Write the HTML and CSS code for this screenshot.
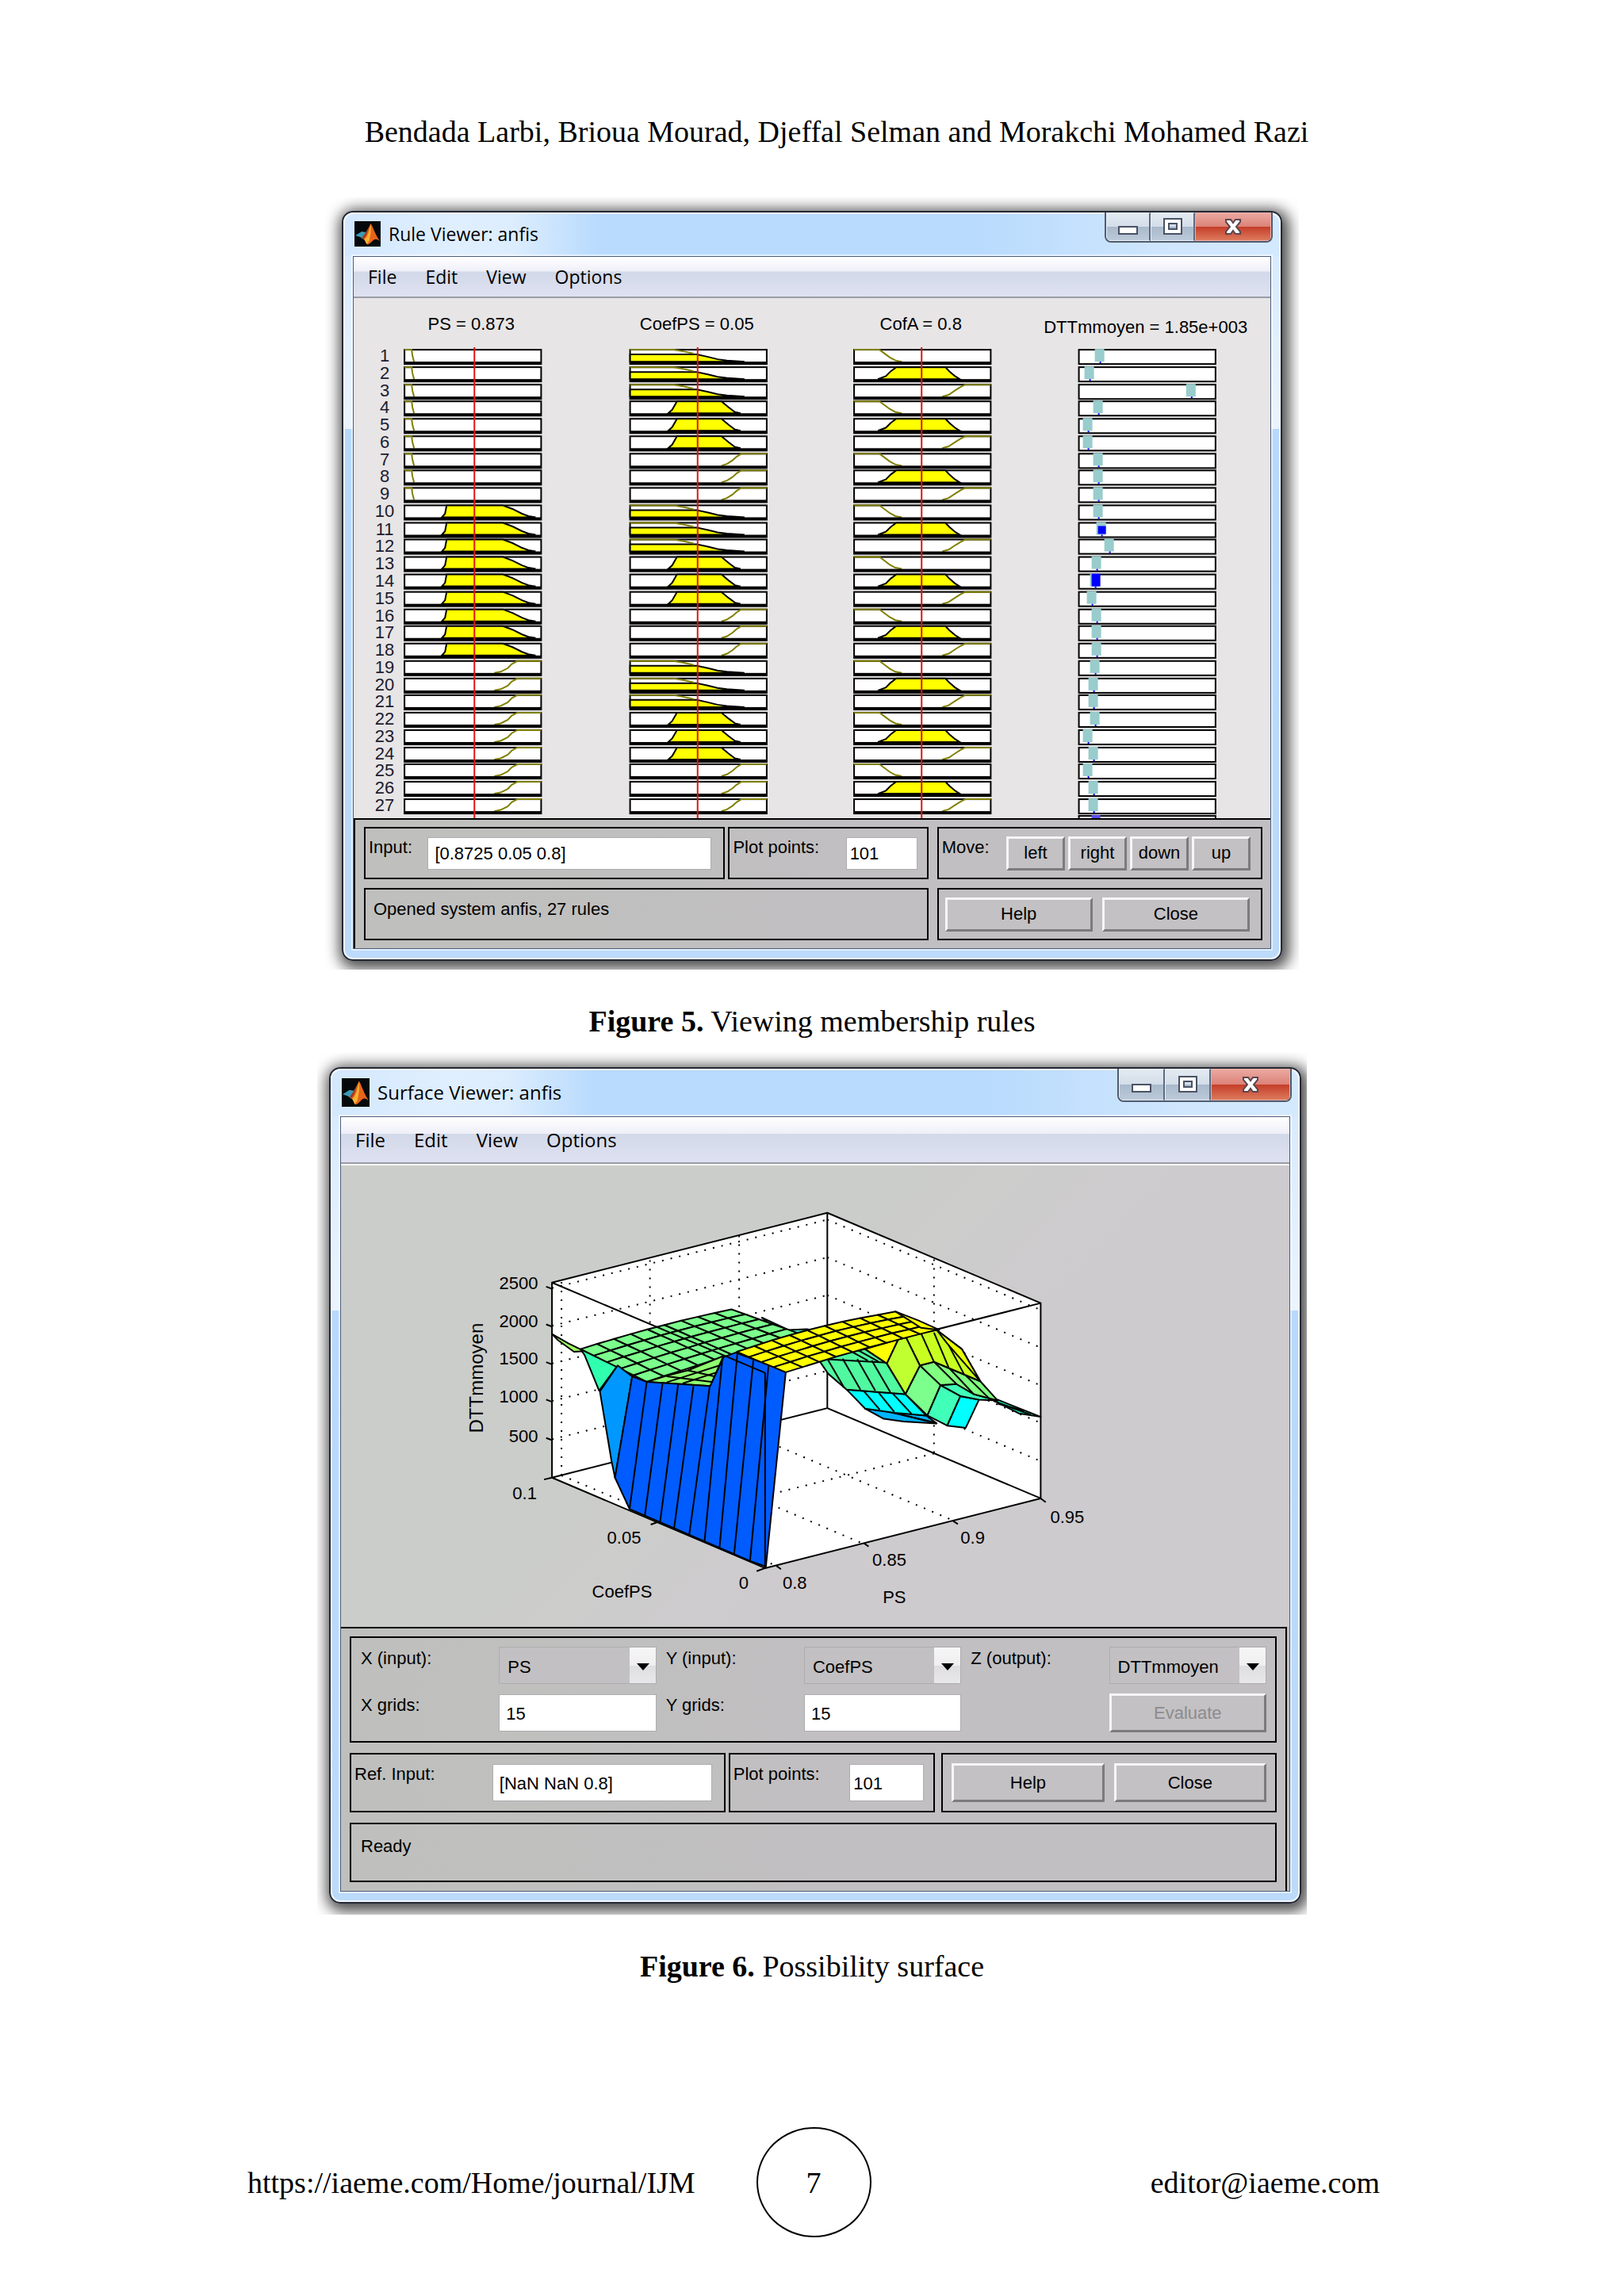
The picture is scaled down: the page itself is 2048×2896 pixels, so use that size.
FILE: index.html
```html
<!DOCTYPE html>
<html lang="en">
  <head>
    <meta charset="UTF-8" />
    <meta name="viewport" content="width=device-width, initial-scale=1.0" />
    <title>Membership rules and possibility surface</title>
    <link rel="stylesheet" href="styles.css">
  </head>
  <body>
    <header class="authors">Bendada Larbi, Brioua Mourad, Djeffal Selman and Morakchi Mohamed Razi</header>
    <main>
      <figure>
        <div class="shot">
          <section class="window rule-viewer">
            <div class="titlebar">
              <svg class="logo" viewBox="0 0 32 32" preserveAspectRatio="none">
                <rect width="32" height="32" fill="#05090b" />
                <path d="M1 18 L9 13 L14 14 L18 7 L16 18 L11 23 L7 20 Z" fill="#3c9ab8" />
                <path d="M14 14 L18 7 L20 4 L17 17 L12 23 L9 21 Z" fill="#a33a1c" />
                <path d="M20 3 C23 8 25 16 31 25 C27 22 25 22 22 25 C19 28 17 30 15 29 C14 26 13 24 11 22 C16 19 17 7 20 3 Z" fill="#e8641b" />
                <path d="M20 4 L20 14 L18 25 L15 29 L12 23 C17 20 18 10 20 4 Z" fill="#f9b233" />
              </svg>
              <h2>Rule Viewer: anfis</h2>
              <div class="win-buttons">
                <button aria-label="Minimize"><svg viewBox="0 0 28 24"><rect x="2" y="12" width="23" height="9" fill="#fff" stroke="#4a5364" stroke-width="2" /></svg></button>
                <button aria-label="Maximize"><svg viewBox="0 0 28 24"><path d="M3 2 H25 V21 H3 Z M9 8 V15 H19 V8 Z" fill="#fff" fill-rule="evenodd" stroke="#4a5364" stroke-width="2" /></svg></button>
                <button class="close" aria-label="Close window"><svg viewBox="0 0 28 24"><path d="M5 3 H11 L14 7 L17 3 H23 V6 L18 12 L23 18 V21 H17 L14 17 L11 21 H5 V18 L10 12 L5 6 Z" fill="#fff" stroke="#5a4650" stroke-width="2" /></svg></button>
              </div>
            </div>
            <div class="client">
              <nav>
                <button>File</button>
                <button>Edit</button>
                <button>View</button>
                <button>Options</button>
              </nav>
              <svg id="rules" class="plot" viewBox="0 0 1154 655"></svg>
              <form class="controls">
                <div class="panel field">
                  <label for="input">Input:</label>
                  <input id="input" type="text" value="[0.8725 0.05 0.8]">
                </div>
                <div class="panel field points">
                  <label for="points1">Plot points:</label>
                  <input id="points1" type="text" value="101">
                </div>
                <div class="panel move">
                  <span>Move:</span>
                  <button type="button">left</button>
                  <button type="button">right</button>
                  <button type="button">down</button>
                  <button type="button">up</button>
                </div>
                <p class="panel status">Opened system anfis, 27 rules</p>
                <div class="panel actions">
                  <button type="button">Help</button>
                  <button type="button">Close</button>
                </div>
              </form>
            </div>
          </section>
        </div>
        <figcaption><b>Figure 5.</b> Viewing membership rules</figcaption>
      </figure>

      <figure>
        <div class="shot wide">
          <section class="window surface-viewer">
            <div class="titlebar">
              <svg class="logo" viewBox="0 0 32 32" preserveAspectRatio="none">
                <rect width="32" height="32" fill="#05090b" />
                <path d="M1 18 L9 13 L14 14 L18 7 L16 18 L11 23 L7 20 Z" fill="#3c9ab8" />
                <path d="M14 14 L18 7 L20 4 L17 17 L12 23 L9 21 Z" fill="#a33a1c" />
                <path d="M20 3 C23 8 25 16 31 25 C27 22 25 22 22 25 C19 28 17 30 15 29 C14 26 13 24 11 22 C16 19 17 7 20 3 Z" fill="#e8641b" />
                <path d="M20 4 L20 14 L18 25 L15 29 L12 23 C17 20 18 10 20 4 Z" fill="#f9b233" />
              </svg>
              <h2>Surface Viewer: anfis</h2>
              <div class="win-buttons">
                <button aria-label="Minimize"><svg viewBox="0 0 28 24"><rect x="2" y="12" width="23" height="9" fill="#fff" stroke="#4a5364" stroke-width="2" /></svg></button>
                <button aria-label="Maximize"><svg viewBox="0 0 28 24"><path d="M3 2 H25 V21 H3 Z M9 8 V15 H19 V8 Z" fill="#fff" fill-rule="evenodd" stroke="#4a5364" stroke-width="2" /></svg></button>
                <button class="close" aria-label="Close window"><svg viewBox="0 0 28 24"><path d="M5 3 H11 L14 7 L17 3 H23 V6 L18 12 L23 18 V21 H17 L14 17 L11 21 H5 V18 L10 12 L5 6 Z" fill="#fff" stroke="#5a4650" stroke-width="2" /></svg></button>
              </div>
            </div>
            <div class="client">
              <nav>
                <button>File</button>
                <button>Edit</button>
                <button>View</button>
                <button>Options</button>
              </nav>
              <svg class="plot" viewBox="0 0 1194 581">
                <g id="surface" transform="translate(130 28) scale(.3333 .3444)"></g>
                <g class="ticks">
                  <text class="end" x="248" y="156">2500</text>
                  <text class="end" x="248" y="204">2000</text>
                  <text class="end" x="248" y="251">1500</text>
                  <text class="end" x="248" y="299">1000</text>
                  <text class="end" x="248" y="348">500</text>
                  <text x="216" y="420">0.1</text>
                  <text x="335" y="476">0.05</text>
                  <text x="501" y="533">0</text>
                  <text x="556" y="533">0.8</text>
                  <text x="669" y="504">0.85</text>
                  <text x="780" y="476">0.9</text>
                  <text x="893" y="450">0.95</text>
                  <text x="316" y="544">CoefPS</text>
                  <text x="682" y="551">PS</text>
                  <text class="zlabel" transform="translate(179 337) rotate(-90)">DTTmmoyen</text>
                </g>
              </svg>
              <form class="controls">
                <div class="panel axes">
                  <label for="xin">X (input):</label>
                  <span class="select"><select id="xin"><option>PS</option></select></span>
                  <label for="yin">Y (input):</label>
                  <span class="select"><select id="yin"><option>CoefPS</option></select></span>
                  <label for="zout">Z (output):</label>
                  <span class="select"><select id="zout"><option>DTTmmoyen</option></select></span>
                  <label for="xgrid">X grids:</label>
                  <input id="xgrid" type="text" value="15">
                  <label for="ygrid">Y grids:</label>
                  <input id="ygrid" type="text" value="15">
                  <button type="button" class="evaluate" disabled>Evaluate</button>
                </div>
                <div class="panel field">
                  <label for="ref">Ref. Input:</label>
                  <input id="ref" type="text" value="[NaN NaN 0.8]">
                </div>
                <div class="panel field points">
                  <label for="points2">Plot points:</label>
                  <input id="points2" type="text" value="101">
                </div>
                <div class="panel actions">
                  <button type="button">Help</button>
                  <button type="button">Close</button>
                </div>
                <p class="panel status">Ready</p>
              </form>
            </div>
          </section>
        </div>
        <figcaption><b>Figure 6.</b> Possibility surface</figcaption>
      </figure>
    </main>
    <footer>
      <a href="https://iaeme.com/Home/journal/IJM">https://iaeme.com/Home/journal/IJM</a>
      <span class="page-number">7</span>
      <a href="mailto:editor@iaeme.com">editor@iaeme.com</a>
    </footer>
    <script src="script.js"></script>
  </body>
</html>
```
FILE: styles.css
```css
* {
  box-sizing: border-box;
}

body {
  margin: 0;
  min-height: 100vh;
  display: flex;
  flex-direction: column;
  background-color: white;
  color: black;
  font-family: "Liberation Serif", "Times New Roman", serif;
  font-size: 38px;
  line-height: 48px;
}

.authors {
  padding: 142px 0 59px 62px;
  text-align: center;
}

figure {
  margin: 0;
  display: flex;
  flex-direction: column;
  align-items: center;
}

figcaption {
  margin: 41px 0 16px;
}

button,
input,
select {
  font: inherit;
  color: inherit;
  margin: 0;
}

/* windows */
.shot {
  width: 100%;
  max-width: 1228px;
  padding: 17px 21px 11px;
  overflow: hidden;
}

.shot.wide {
  max-width: 1248px;
  padding: 18px 7px 14px 15px;
}

.window {
  border: 2px solid #232834;
  border-radius: 14px;
  padding: 0 12px 13px;
  background: linear-gradient(#d3e8fe, #eaf4fe 29%, #b7d9fd 29%, #bcdafa);
  box-shadow: inset 0 0 0 2px rgba(255, 255, 255, 0.8), 3px 4px 18px 6px rgba(0, 0, 0, 0.7);
  font-family: "Liberation Sans", Arial, sans-serif;
  font-size: 22px;
  line-height: 26px;
}

.titlebar {
  display: flex;
  align-items: center;
  height: 55px;
  margin: 0 -10px;
  padding: 0 8px 3px 12px;
  border-top: 2px solid #eef7ff;
  border-radius: 12px 12px 0 0;
  background: linear-gradient(to right, #d3e8fe, #e0effe 12%, #dcedfe 18%, #b9dbfd 27%, #b9dbfd 68%, #cfe6fd 88%, #d3e9fe);
}

.logo {
  width: 33px;
  height: 32px;
}

.titlebar h2 {
  margin: 0 auto 0 10px;
  font-family: "Open Sans", "Noto Sans", sans-serif;
  font-size: 23px;
  font-weight: normal;
}

.win-buttons {
  display: flex;
  align-self: flex-start;
  height: 38px;
  margin-top: -2px;
  border: 2px solid #4f5b6e;
  border-top: 0;
  border-radius: 0 0 8px 8px;
  overflow: hidden;
}

.win-buttons button {
  display: flex;
  align-items: center;
  justify-content: center;
  width: 56px;
  padding: 0;
  border: 1px solid #e8eff7;
  border-right: 2px solid #5d6b80;
  background: linear-gradient(#e3eaf2, #d3dde9 50%, #a9b9cb 50%, #bccada);
}

.win-buttons .close {
  width: 96px;
  border-color: #eeb0a8;
  border-right-width: 1px;
  background: linear-gradient(#eba9a1, #dc8277 50%, #c53d28 50%, #dc7a5c);
}

.win-buttons svg {
  width: 28px;
  height: 24px;
}

.client {
  border: 1px solid #4d5d79;
  outline: 2px solid rgba(255, 255, 255, 0.6);
}

nav {
  display: flex;
  height: 52px;
  border-bottom: 2px solid #9a9ca6;
  background: linear-gradient(#fff, #efeff9 36%, #d2d9e8 38%, #dfe1f2);
  font-family: "Open Sans", "Noto Sans", sans-serif;
  font-size: 23px;
}

nav button {
  padding: 0 18px;
  border: 0;
  background: none;
}

.plot {
  display: block;
  width: 100%;
  background-color: #e7e5e6;
  font-size: 22px;
}

/* control area under the plots */
.controls {
  display: grid;
  grid-template-columns: 455fr 256fr 421fr;
  gap: 11px 0;
  padding: 9px 10px 10px 11px;
  border-top: 2px solid black;
  border-left: 2px solid black;
  background: linear-gradient(to right, #bfc0bd, #c1bfc1 50%);
}

.panel {
  display: flex;
  align-items: center;
  min-height: 66px;
  margin: 0;
  border: 2px solid black;
}

.panel label,
.move span {
  align-self: flex-start;
  padding-top: 11px;
}

.controls input {
  height: 41px;
  min-width: 0;
  padding: 2px 8px 0;
  border: 1px solid #adadb0;
  background-color: white;
}

.controls button {
  height: 43px;
  padding: 0;
  border: 3px solid;
  border-color: #f6f6f6 #7c7a7c #7c7a7c #f6f6f6;
  background-color: #c3c1c3;
}

.field {
  padding: 0 15px 0 4px;
  justify-content: space-between;
}

.field input {
  width: 358px;
}

.points {
  margin-left: 4px;
  padding-right: 12px;
}

.points input {
  width: 90px;
  padding: 2px 4px 0;
}

.move {
  margin-left: 11px;
  padding: 0 13px 0 4px;
  gap: 4px;
}

.move span {
  margin-right: auto;
}

.move button {
  width: 74px;
}

.status {
  padding: 0 10px 12px;
}

.rule-viewer .status {
  grid-column: 1 / 3;
}

.actions {
  margin-left: 11px;
  padding: 0 14px 0 8px;
  gap: 12px;
}

.actions button {
  flex: 1;
}

/* surface viewer */
.surface-viewer .titlebar {
  height: 60px;
}

.surface-viewer .logo {
  width: 35px;
  height: 36px;
}

.surface-viewer h2,
.surface-viewer nav {
  font-size: 24px;
}

.surface-viewer .win-buttons {
  height: 42px;
}

.surface-viewer .win-buttons button {
  width: 58px;
}

.surface-viewer .win-buttons .close {
  width: 100px;
}

.surface-viewer nav {
  height: 59px;
}

.surface-viewer .plot {
  border-top: 2px solid white;
  background: linear-gradient(135deg, #cbcdca 40%, #cecbce 60%);
}

.surface-viewer .controls {
  grid-template-columns: 473fr 264fr 430fr;
  gap: 13px 0;
  margin-right: 3px;
  padding: 10px 11px 11px;
  border-left: 0;
  border-right: 2px solid black;
}

.surface-viewer .client {
  background-color: #c1bfc1;
}

.surface-viewer .panel {
  min-height: 75px;
}

.surface-viewer .controls input {
  height: 47px;
}

.surface-viewer .controls button {
  height: 49px;
}

.surface-viewer .field input {
  width: 277px;
}

.surface-viewer .points input {
  width: 94px;
}

.surface-viewer .field label {
  padding-top: 12px;
}

.surface-viewer .actions {
  margin-left: 8px;
  padding: 0 11px;
}

.surface-viewer .status {
  grid-column: 1 / 4;
  padding: 0 12px 16px;
}

.surface-viewer .axes {
  grid-column: 1 / 4;
  display: grid;
  grid-template-columns: 162fr 198fr 162fr 198fr 162fr 198fr;
  gap: 12px;
  padding: 11px 11px 11px 12px;
}

.surface-viewer .axes label {
  padding-top: 2px;
}

.axes .evaluate {
  grid-column: 6;
  color: #8d8b8d;
}

.select {
  position: relative;
  display: block;
}

.select select {
  appearance: none;
  width: 100%;
  height: 47px;
  padding: 4px 10px 0;
  border: 1px solid #adadb0;
  border-radius: 0;
  background: linear-gradient(#f6f6f7, #efeff0 50%, #dedee0 50%, #e8e8ea) right / 33px 100% no-repeat #c2c0c2;
}

.select::after {
  content: "";
  position: absolute;
  right: 9px;
  top: 21px;
  border: 8px solid transparent;
  border-top: 9px solid black;
  border-bottom: 0;
  pointer-events: none;
}

/* plots */
.box {
  fill: white;
  stroke: black;
  stroke-width: 2;
}

.mf {
  fill: none;
  stroke: #808000;
  stroke-width: 2;
}

.fired {
  fill: #ff0;
  stroke: black;
  stroke-width: 2;
}

.value {
  stroke: #e01414;
  stroke-width: 2;
}

.heading,
.number {
  text-anchor: middle;
}

.number {
  fill: #1c1c30;
}

.mesh {
  stroke: black;
  stroke-width: 2;
  stroke-linejoin: round;
  vector-effect: non-scaling-stroke;
}

.dots {
  stroke: black;
  stroke-width: 2;
  stroke-dasharray: 2 9;
  vector-effect: non-scaling-stroke;
}

.end {
  text-anchor: end;
}

.zlabel {
  font-size: 24px;
}

footer {
  display: grid;
  grid-template-columns: 1fr 145px 1fr;
  align-items: center;
  margin-top: auto;
  padding: 0 308px 74px 312px;
}

footer a {
  color: inherit;
  text-decoration: none;
}

footer a:last-child {
  text-align: right;
}

.page-number {
  display: flex;
  align-items: center;
  justify-content: center;
  height: 139px;
  border: 2px solid black;
  border-radius: 50%;
}
```
FILE: script.js
```js
const svgNS = "http://www.w3.org/2000/svg";

function add(parent, tag, attrs, text) {
  const el = document.createElementNS(svgNS, tag);
  for (const key in attrs) el.setAttribute(key, attrs[key]);
  if (text) el.textContent = text;
  parent.appendChild(el);
}

// ---- rule viewer ----
const rules = document.querySelector("#rules");
const boxWidth = 172;
const boxHeight = 18;
const firstRow = 65;
const rowStep = 21.77;

// membership functions, x in pixels of the box, y from 0 (top) to 1 (bottom)
const inputs = [
  {
    title: "PS = 0.873", x: 64, at: 88, every: 9,
    mf: [
      { line: [[0, 0], [9, 0], [10, 0.5], [12, 1]] },
      { fill: [[47, 1], [51, 0.7], [53, 0], [124, 0], [136, 0.3], [148, 0.7], [156, 0.9], [165, 1]] },
      { line: [[113, 1], [121, 0.9], [130, 0.6], [135, 0.25], [142, 0], [172, 0]] },
    ],
  },
  {
    title: "CoefPS = 0.05", x: 348, at: 85, every: 3,
    mf: [
      { line: [[0, 0], [55, 0], [68, 0.15], [80, 0.33]], fill: [[0, 0.4], [84, 0.4], [98, 0.6], [110, 0.8], [122, 0.9], [144, 1], [0, 1]] },
      { fill: [[48, 1], [53, 0.7], [59, 0], [115, 0], [124, 0.5], [132, 0.9], [139, 1]] },
      { line: [[115, 1], [122, 0.85], [129, 0.55], [134, 0.25], [140, 0], [172, 0]] },
    ],
  },
  {
    title: "CofA = 0.8", x: 630, at: 85, every: 1,
    mf: [
      { line: [[0, 0], [32, 0], [38, 0.3], [45, 0.65], [52, 0.9], [60, 1]] },
      { fill: [[30, 1], [40, 0.75], [46, 0.35], [53, 0], [115, 0], [120, 0.35], [127, 0.75], [133, 1]] },
      { line: [[111, 1], [119, 0.85], [128, 0.45], [134, 0.2], [140, 0], [172, 0]] },
    ],
  },
];
const outputs = [20, 7, 135, 18, 5, 5, 18, 18, 18, 18, 22, 32, 16, 14, 10, 16, 16, 16, 14, 12, 12, 14, 5, 12, 5, 12, 12];
const outputX = 913;

inputs.forEach((input) => {
  add(rules, "text", { class: "heading", x: input.x + 84, y: 40 }, input.title);
});
add(rules, "text", { class: "heading", x: 997, y: 44 }, "DTTmmoyen = 1.85e+003");

outputs.forEach((value, i) => {
  const y = Math.round(firstRow + i * rowStep);
  add(rules, "text", { class: "number", x: 39, y: y + 15 }, String(i + 1));

  inputs.forEach((input) => {
    const mf = input.mf[Math.floor(i / input.every) % 3];
    const toPoints = (list) => list.map((p) => input.x + p[0] + "," + (y + p[1] * 15)).join(" ");
    add(rules, "rect", { class: "box", x: input.x, y: y, width: boxWidth, height: boxHeight });
    if (mf.fill) add(rules, "polygon", { class: "fired", points: toPoints(mf.fill) });
    if (mf.line) add(rules, "polyline", { class: "mf", points: toPoints(mf.line) });
    add(rules, "rect", { x: input.x, y: y + 15, width: boxWidth, height: 3 });
  });

  add(rules, "rect", { class: "box", x: outputX, y: y, width: boxWidth, height: boxHeight });
  add(rules, "rect", { x: outputX + value, y: y - 1, width: 12, height: 16, fill: "#9cc" });
  add(rules, "rect", { x: outputX + value + 6, y: y + 15, width: 2, height: 2, fill: "#00f" });
});

// the two rules that fire
add(rules, "rect", { x: outputX + 24, y: firstRow + 222, width: 10, height: 10, fill: "#00f" });
add(rules, "rect", { x: outputX + 16, y: firstRow + 282, width: 11, height: 16, fill: "#00f" });

// top of the aggregated output, cut by the lower edge
add(rules, "rect", { class: "box", x: outputX, y: 652, width: boxWidth, height: boxHeight });
add(rules, "rect", { x: outputX + 16, y: 651, width: 11, height: 5, fill: "#5a50f0" });

inputs.forEach((input) => {
  add(rules, "line", { class: "value", x1: input.x + input.at, x2: input.x + input.at, y1: 62, y2: 655 });
});

// ---- surface viewer ----
const surface = document.querySelector("#surface");

function face(points, fill) {
  add(surface, "polygon", { class: "mesh", points: points, fill: fill });
}
function line(x1, y1, x2, y2, name = "mesh") {
  add(surface, "line", { class: name, x1, y1, x2, y2 });
}

// bilinear mesh between two edges, "lift" bows the upper edge
function mesh(a, b, c, d, cols, rows, lift, fill) {
  const at = (u, v) => {
    const p = [0, 1].map((k) => (1 - v) * ((1 - u) * a[k] + u * b[k]) + v * ((1 - u) * c[k] + u * d[k]));
    p[1] -= lift * Math.sin(Math.PI * u) * (1 - v * 0.6);
    return p.map(Math.round).join(",");
  };
  for (let i = 0; i < cols; i++) {
    for (let j = 0; j < rows; j++) {
      const u = i / cols, v = j / rows, u2 = (i + 1) / cols, v2 = (j + 1) / rows;
      face([at(u, v), at(u2, v), at(u2, v2), at(u, v2)].join(" "), fill);
    }
  }
}

// box and grid
face("407,347 1447,92 2253,422 2253,1136 1212,1391 407,1060", "#fff");
line(1447, 92, 1447, 806);
line(407, 1060, 1447, 806);
line(1447, 806, 2253, 1136);
line(2253, 422, 1212, 677);
[367, 505, 643, 780, 920].forEach((y) => {
  line(407, y, 1447, y - 250, "dots");
  line(1447, y - 250, 2253, y + 80, "dots");
  line(385, y - 5, 407, y + 3);
});
line(443, 345, 443, 1050, "dots");
line(777, 265, 777, 970, "dots");
line(1114, 175, 1114, 885, "dots");
line(1850, 262, 1850, 972, "dots");
line(443, 1052, 1260, 1385, "dots");
line(777, 970, 1590, 1305, "dots");
line(1114, 885, 1930, 1220, "dots");
line(1850, 972, 800, 1225, "dots");
line(377, 1067, 407, 1060);
line(780, 1232, 805, 1223);
line(1180, 1402, 1212, 1391);
line(2253, 1136, 2272, 1150);
line(1920, 1217, 1940, 1230);
line(1585, 1300, 1603, 1312);
line(1255, 1383, 1272, 1395);

// far green part
face("407,535 470,570 530,598 490,600 430,558", "#a0ff60");
face("515,590 610,635 655,650 585,742 530,612", "#30ffb0");
face("1200,475 1300,520 1370,517 1400,522 1300,555", "#40e8b8");
mesh([515, 590], [1085, 445], [765, 710], [1345, 535], 9, 5, 8, "#7cff8c");
face("765,710 840,688 920,668 1055,615 1005,725", "#90ff70");
line(840, 712, 1040, 650);
line(900, 716, 1030, 675);
line(840, 690, 1010, 710);
line(920, 668, 1020, 690);

// blue wall
face("655,650 710,690 645,1060 632,1000 588,745", "#0098ff");
face("710,690 765,710 1005,725 1055,620 1100,603 1230,650 1290,675 1215,1385 1155,1365 700,1175 645,1060", "#005cff");
[
  [765, 710, 700, 1175], [825, 712, 757, 1205], [884, 716, 815, 1225], [942, 720, 868, 1247],
  [1003, 725, 925, 1272], [1050, 630, 983, 1295], [1107, 608, 1040, 1315], [1168, 628, 1095, 1340],
  [1225, 650, 1155, 1365],
].forEach((p) => line(...p));

// lower slopes on the right
face("1590,808 1820,833 1860,862 1735,855 1660,845", "#00b4ff");
line(1660, 815, 1850, 858);
line(1700, 823, 1860, 862);
face("1520,738 1742,755 1820,833 1700,823 1590,808", "#00ffff");
line(1580, 738, 1645, 812);
line(1635, 742, 1700, 820);
line(1690, 748, 1765, 827);
face("1415,630 1590,590 1672,643 1742,755 1520,738 1450,680", "#50f8a0");
line(1450, 630, 1510, 730);
line(1505, 625, 1572, 738);
line(1560, 627, 1628, 742);
line(1615, 632, 1685, 748);
line(1420, 626, 1672, 640);
line(1540, 600, 1600, 632);
line(1565, 595, 1640, 636);
face("1797,650 1875,722 1825,833 1742,755", "#7cff8c");
face("1875,722 1950,762 1900,870 1825,833", "#40ffb8");
face("1950,762 2020,775 1970,878 1900,870", "#00ffff");
face("2060,770 2090,775 2253,838 2170,825", "#20e8b8");
line(2075, 780, 2215, 830);
line(2090, 790, 2190, 815);
face("1875,722 1935,718 2000,755 2090,778 2020,775 1950,762", "#40ffb8");
face("1797,650 1850,637 2025,708 2090,778 2000,755 1935,718 1875,722", "#80ff80");
line(1850, 637, 1935, 718);
line(1905, 657, 2000, 755);
line(1965, 682, 2060, 772);
face("1590,590 1715,555 1672,643", "#ffff00");
face("1715,555 1745,548 1797,650 1742,755 1672,643", "#c0ff30");
face("1745,548 1800,530 1860,520 1955,590 2025,708 1850,637 1797,650", "#c8ff20");
line(1800, 530, 1850, 637);
line(1850, 530, 1905, 657);
line(1905, 575, 1965, 685);
face("1860,520 1955,590 2025,708 1900,570", "#e8ff00");
mesh([1105, 600], [1705, 453], [1290, 675], [1860, 520], 9, 4, 14, "#ffff00");
face("1705,453 1790,485 1870,520 1800,512", "#ffff00");

// front edges
line(407, 347, 1212, 677);
line(1212, 677, 1212, 1391);
```
